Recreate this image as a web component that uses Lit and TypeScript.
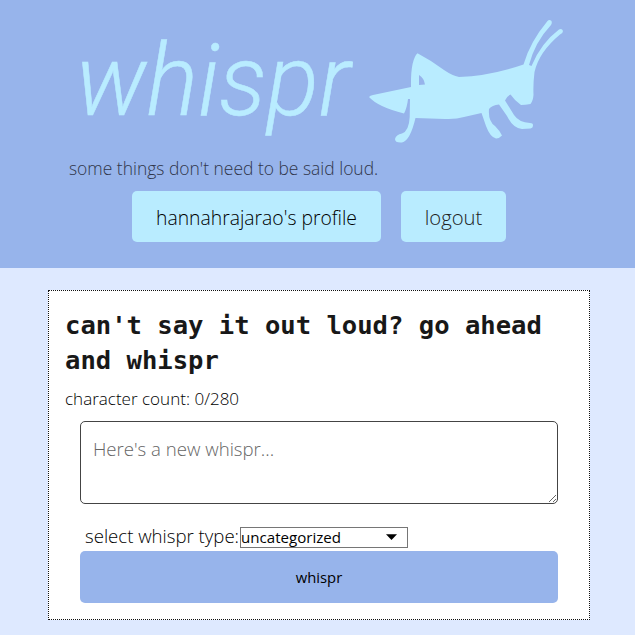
import { LitElement, html, css } from "lit";
import { customElement, state } from "lit/decorators.js";

@customElement("whispr-logo")
class WhisprLogo extends LitElement {
  static styles = css`
    :host { display: block; }
    svg { display: block; }
    .word { font: italic 300 100px Roboto, "Liberation Sans", sans-serif; stroke: #b9ecff; stroke-width: 0.5px; }
  `;
  render() {
    return html`<svg width="635" height="150" viewBox="0 0 635 150" fill="#b9ecff" role="img" aria-label="whispr">
      <text class="word" x="75.500" y="115" textLength="275" lengthAdjust="spacingAndGlyphs">whispr</text>
      <path fill-rule="evenodd" d="M369 97 Q370 95.5 373 95 L411 87 Q410.500 60 417.500 53.300 Q432 61 444 70 Q452 75.500 459 77 Q490 76 523.500 64.500 Q530 42 547.500 21 Q549 19.400 551 20.500 Q552.600 22 551 25 Q535 42 529 65 L531.500 66 Q541 43 559 29.500 Q562 28 563 31 Q563 33 560 34.500 Q539 52 534.500 72 Q533 84 533.500 95 Q533 101 530.500 104 Q525 105 521 105 Q515 101 510.500 94.500 Q506 97 505 100.500 L514 115 Q519 122.500 530 123 Q533 123 533 125 Q533 128 530.500 128.500 L522 129 Q513 128 507 116 L499 104.500 Q492 105 489 109 Q488 121 495 126 Q500 131 502 135.500 Q499 138.700 496 138.500 Q490 137 486 126 L481.500 113 L464 117 Q456 119.500 445 119 L415.500 118 Q410 141 402 142.500 Q395 143 395 139 Q396 134.500 402 133.500 Q409 131 409.700 117 L410 99 L408 99 Q407 108 404 113.500 Q378 107 369 97Z M419 75 L419 85 L425 84.500 Q424 78 419 75Z"></path>
    </svg>`;
  }
}

@customElement("app-root")
class AppRoot extends LitElement {
  static styles = css`
    :host { display: block; min-height: 635px; background: #dee9ff; color: #000; font-family: "Open Sans", "Noto Sans", sans-serif; font-weight: 360; }
    * { box-sizing: border-box; }
    header { height: 268px; background: #97b4eb; }
    .tagline { margin: 0; height: 41px; padding: 5px 0 0 69px; font-size: 17.45px; line-height: 26px; color: #30364a; white-space: nowrap; }
    nav { display: flex; gap: 20px; padding-left: 132px; }
    .link { height: 51px; border: 0; border-radius: 5px; background: #b9ecff; color: #000; font: inherit; font-size: 19.35px; padding: 2px 0 0; white-space: nowrap; }
    .profile { width: 249px; }
    .logout { width: 105px; font-size: 20.3px; color: #222; padding: 0; }
    main { margin: 22px 45px 0 48px; height: 330px; width: 542px; border: 1px dotted #111; background: #fff; padding: 17px 16px 0; }
    h1 { margin: 0; font: bold 25.55px/35px "DejaVu Sans Mono", monospace; color: #181818; height: 75px; }
    .count { margin: 0; font-size: 17.05px; line-height: 32px; height: 38px; white-space: nowrap; }
    form { padding: 0 15px; }
    textarea { display: block; width: 478px; height: 83px; border: 1px solid #444; border-radius: 5px; padding: 14px 12px; font: inherit; font-size: 18.6px; line-height: 26px; color: #111; background: #fff; resize: vertical; }
    textarea::placeholder { color: #656565; }
    .row { display: flex; align-items: center; height: 47px; padding: 18px 0 0 5px; }
    label { width: 155px; font-size: 18.6px; line-height: 24px; margin-top: -2px; white-space: nowrap; }
    .select { display: flex; align-items: center; justify-content: space-between; width: 168px; height: 21px; margin-top: 1px; border: 1px solid #767676; background: #fff; padding: 0 10px 0 0; font-size: 15.1px; line-height: 19px; color: #000; font-weight: 400; }
    .send { display: block; width: 478px; height: 52px; border: 0; border-radius: 5px; background: #97b4eb; font: inherit; font-size: 14.8px; font-weight: 400; color: #000; padding: 0; }
  `;
  @state() private text = "";
  private onInput(e: Event) { this.text = (e.target as HTMLTextAreaElement).value; }
  render() {
    return html`
      <header>
        <whispr-logo></whispr-logo>
        <p class="tagline">some things don't need to be said loud.</p>
        <nav>
          <button class="link profile">hannahrajarao's profile</button>
          <button class="link logout">logout</button>
        </nav>
      </header>
      <main>
        <h1>can't say it out loud? go ahead and whispr</h1>
        <p class="count">character count: ${this.text.length}/280</p>
        <form>
          <textarea placeholder="Here's a new whispr..." @input=${this.onInput}></textarea>
          <div class="row">
            <label>select whispr type:</label>
            <div class="select" role="combobox"><span>uncategorized</span>
              <svg width="11" height="6" viewBox="0 0 11 6"><path d="M0 .2H11L5.500 6Z"></path></svg>
            </div>
          </div>
          <button class="send" type="button">whispr</button>
        </form>
      </main>
    `;
  }
}
